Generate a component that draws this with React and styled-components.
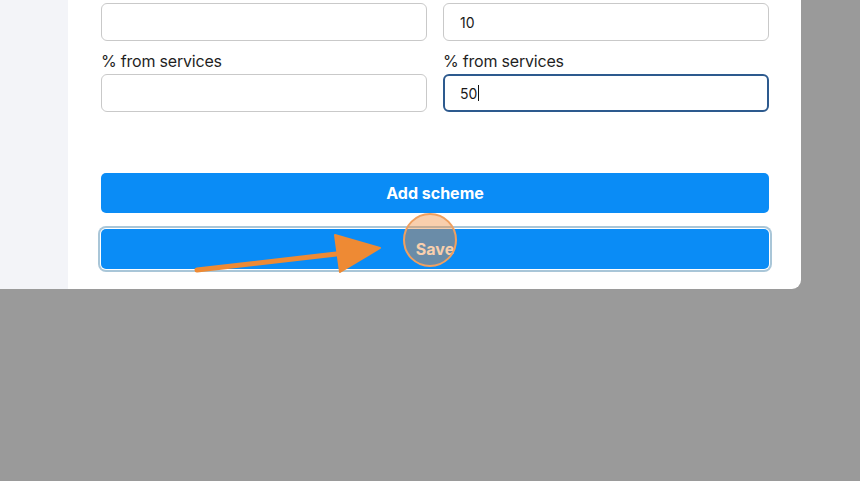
import React from "react";
import styled, { createGlobalStyle } from "styled-components";

const Global = createGlobalStyle`
  html, body { margin: 0; padding: 0; background: #9a9a9a; }
  body { font-family: Inter, "Noto Sans", Arial, sans-serif; }
  * { box-sizing: border-box; }
`;

const Stage = styled.div`
  position: relative;
  width: 860px;
  height: 481px;
  background: #9a9a9a;
  overflow: hidden;
`;

const Frame = styled.div`
  width: 801px;
  height: 289px;
  display: flex;
  background: #fff;
  border-bottom-right-radius: 9px;
  overflow: hidden;
`;

const Sidebar = styled.div`
  width: 68px;
  background: #f3f4f8;
`;

const Main = styled.div`
  flex: 1;
  padding: 3px 32px 0 33px;
  display: flex;
  flex-direction: column;
`;

const Grid = styled.div`
  display: grid;
  grid-template-columns: 1fr 1fr;
  column-gap: 16px;
`;

const Field = styled.div`
  display: flex;
  flex-direction: column;
`;

const Label = styled.div`
  font-size: 16px;
  letter-spacing: -0.2px;
  color: #1f1f1f;
  height: 33px;
  line-height: 20px;
  padding-top: 10px;
`;

const Input = styled.div`
  height: 38px;
  border: ${(p) => (p.$focused ? "2px solid #2d5a8e" : "1px solid #c9c9c9")};
  border-radius: 6px;
  display: flex;
  align-items: center;
  padding-left: ${(p) => (p.$focused ? "15px" : "16px")};
  font-size: 14px;
  color: #1a1a1a;
`;

const Caret = styled.span`
  display: inline-block;
  width: 1px;
  height: 16px;
  background: #111;
  margin-left: 1px;
`;

const Buttons = styled.div`
  margin-top: 61px;
  display: flex;
  flex-direction: column;
  gap: 16px;
`;

const Button = styled.div`
  height: 40px;
  border-radius: 5px;
  background: #0a8cf6;
  color: #fff;
  font-weight: 700;
  font-size: 16px;
  display: flex;
  align-items: center;
  justify-content: center;
  box-shadow: ${(p) => (p.$focus ? "0 0 0 1px #fff, 0 0 0 3px #a9c6d8" : "none")};
`;

const Overlay = styled.svg`
  position: absolute;
  left: 0;
  top: 0;
  pointer-events: none;
`;

export default function App() {
  return (
    <Stage>
      <Global />
      <Frame>
        <Sidebar />
        <Main>
          <Grid>
            <Field>
              <Input />
            </Field>
            <Field>
              <Input>10</Input>
            </Field>
            <Field>
              <Label>% from services</Label>
              <Input />
            </Field>
            <Field>
              <Label>% from services</Label>
              <Input $focused>
                50<Caret />
              </Input>
            </Field>
          </Grid>
          <Buttons>
            <Button>Add scheme</Button>
            <Button $focus>Save</Button>
          </Buttons>
        </Main>
      </Frame>
      <Overlay width="860" height="481" viewBox="0 0 860 481">
        <circle cx="430" cy="240" r="26" fill="rgba(240,140,60,0.42)" stroke="#f0a060" strokeWidth="2" />
        <line x1="197" y1="270" x2="345" y2="253" stroke="#ee8a34" strokeWidth="5" strokeLinecap="round" />
        <polygon points="335,235 380,248 340,272" fill="#ee8a34" stroke="#ee8a34" strokeWidth="2" strokeLinejoin="round" />
      </Overlay>
    </Stage>
  );
}
